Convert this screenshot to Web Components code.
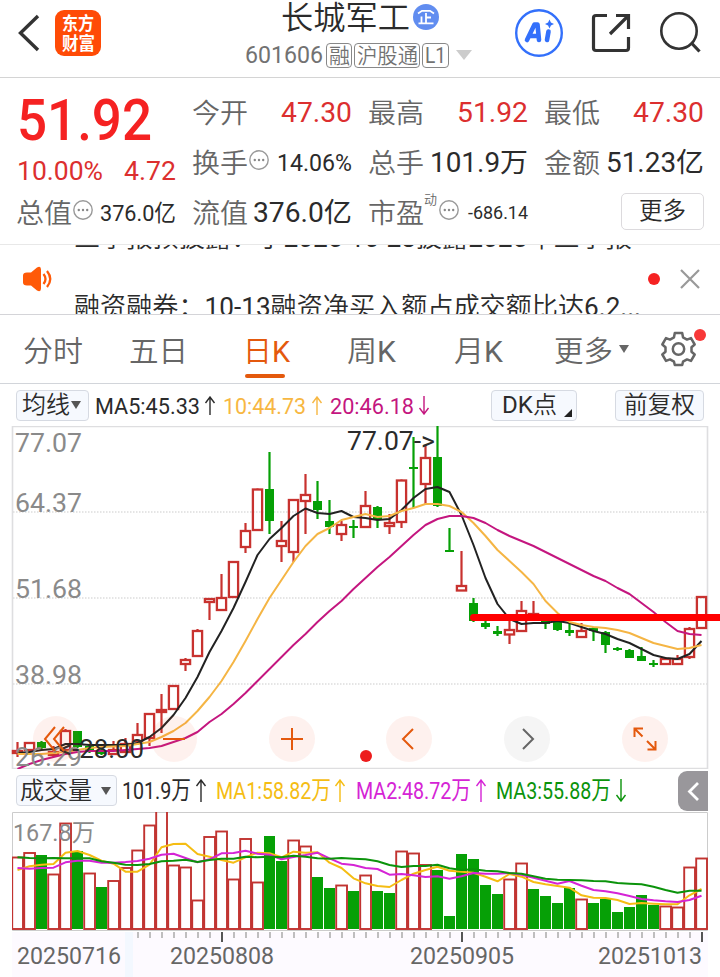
<!DOCTYPE html>
<html lang="zh-CN">
<head>
<meta charset="UTF-8">
<title>长城军工 601606</title>
<style>
  :root {
    --red: #dc2f2f;
    --orange: #e4590d;
    --grey: #666;
    --dark: #2b2b2b;
  }
  body {
    margin: 0;
    width: 720px;
    height: 977px;
    overflow: hidden;
    background: #fff;
    color: var(--dark);
    font-family: Roboto, "Noto Sans CJK SC", sans-serif;
  }
</style>
</head>
<body>
<app-header></app-header>
<quote-panel></quote-panel>
<news-ticker></news-ticker>
<period-tabs></period-tabs>
<ma-bar></ma-bar>
<kline-chart></kline-chart>
<volume-bar></volume-bar>
<volume-chart></volume-chart>

<script>
class BaseElement extends HTMLElement {
  constructor() {
    super();
    this.attachShadow({ mode: 'open' });
  }
  connectedCallback() {
    this.shadowRoot.innerHTML = this.render();
  }
}

// with "split", Chinese runs are drawn lighter than the digits beside them
const lightHan = text => text.replace(/[\u3000-\u9fff\uff00-\uffef]+/g, '<tspan class="han">$&</tspan>');

// one line of text, set to a fixed width
class FitText extends BaseElement {
  render() {
    const w = this.getAttribute('w');
    const size = Number(this.getAttribute('size'));
    const text = this.textContent.trim();
    const latin = /[A-Za-z0-9]/.test(text);
    const weight = this.getAttribute('weight') || (latin ? 400 : 350);
    return `
      <style>
        :host { display: block; flex: none; width: ${w}px; height: ${size}px; }
        svg { display: block; overflow: visible; }
        text { fill: currentColor; font-size: ${size}px; font-weight: ${weight}; }
        .han { font-weight: 350; }
      </style>
      <svg width="${w}" height="${size}"><text x="0" y="${size * 0.87}" textLength="${w}" lengthAdjust="spacingAndGlyphs">${this.hasAttribute('split') ? lightHan(text) : text}</text></svg>`;
  }
}
customElements.define('fit-text', FitText);

class TrendArrow extends BaseElement {
  render() {
    const h = Number(this.getAttribute('h') || 19);
    const flip = this.hasAttribute('down') ? `transform="rotate(180 6 ${h / 2})"` : '';
    return `
      <style>:host { display: block; flex: none; width: 12px; height: ${h}px; } svg { display: block; }</style>
      <svg width="12" height="${h}" fill="none" stroke="currentColor" stroke-width="1.4">
        <path ${flip} d="M6 ${h}V1M1.5 7L6 1l4.5 6"/>
      </svg>`;
  }
}
customElements.define('trend-arrow', TrendArrow);

class AppHeader extends BaseElement {
  render() {
    return `
      <style>
        :host { display: flex; height: 77px; border-bottom: 1px solid #d4d4d4; box-sizing: content-box; }
        .left { display: flex; width: 245px; }
        .back { margin: 14px 0 0 17px; }
        .logo {
          width: 46px; height: 46px; margin: 10px 0 0 14px; border-radius: 9px; background: #ff4b06; color: #fff;
          display: flex; flex-direction: column; align-items: center; justify-content: center; gap: 1px;
        }
        .mid { width: 270px; }
        .title { display: flex; align-items: center; margin: 1px 0 0 36px; height: 32px; gap: 3px; }
        .sub { display: flex; align-items: center; margin-top: 9px; height: 26px; color: #727272; gap: 2px; }
        .tag { border: 1px solid #888; border-radius: 4px; height: 23px; display: flex; align-items: center; justify-content: center; }
        .tri { border: 8px solid transparent; border-top: 10px solid #ccc; border-bottom: 0; margin-left: 5px; }
      </style>
      <div class="left">
        <svg class="back" width="24" height="40" fill="none" stroke="#333" stroke-width="3.4"><path d="M21 2L3.5 19 21 36"/></svg>
        <div class="logo">
          <fit-text w="32" size="18.500" weight="700">东方</fit-text>
          <fit-text w="33" size="18.500" weight="700">财富</fit-text>
        </div>
      </div>
      <div class="mid">
        <div class="title">
          <fit-text w="129" size="32">长城军工</fit-text>
          <svg width="26" height="26"><circle cx="13" cy="13" r="13" fill="#618df0"/><g fill="none" stroke="#fff" stroke-width="1.8"><path d="M5 9.500L9 6.800H17L21 9.500M13 9V19M13 13.500H18M8.500 12.500V19M5.500 19.300H20.500"/></g></svg>
        </div>
        <div class="sub">
          <fit-text w="78" size="23.500">601606</fit-text>
          <span class="tag" style="width:24px;margin-left:1px"><fit-text w="21" size="21">融</fit-text></span>
          <span class="tag" style="width:64px"><fit-text w="61" size="21">沪股通</fit-text></span>
          <span class="tag" style="width:25px"><fit-text w="21" size="22">L1</fit-text></span>
          <i class="tri"></i>
        </div>
      </div>
      <svg width="205" height="77" fill="none" stroke="#333" stroke-width="3.2">
        <circle cx="24" cy="33" r="22.800" stroke="#3370fb" stroke-width="2.400"/>
        <g stroke="#3370fb" stroke-width="4.600" stroke-linejoin="round" stroke-linecap="round"><path d="M12 40L19.500 24.500H22.500L24 40M15 36H23"/><path d="M33.500 31.500L32 40"/></g>
        <path d="M34.500 19.500L35.900 22.600 39 24 35.900 25.400 34.500 28.500 33.100 25.400 30 24 33.100 22.600Z" fill="#3370fb" stroke="none"/>
        <path d="M92 15.500H81q-2.500 0-2.500 2.500V48q0 2.500 2.500 2.500H111q2.500 0 2.500-2.500V37M101 15.500H113.500V29M113 16L95 34"/>
        <circle cx="164" cy="31" r="17.700" stroke-width="2.600"/><path d="M176 42.500L184.500 51.500"/>
      </svg>`;
  }
}
customElements.define('app-header', AppHeader);

class InfoDot extends BaseElement {
  render() {
    return `
      <style>:host { display: block; width: 20px; height: 20px; } svg { display: block; }</style>
      <svg width="20" height="20"><circle cx="10" cy="10" r="9.200" fill="none" stroke="#999" stroke-width="1.400"/>
      <g fill="#888"><circle cx="5.800" cy="10" r="1.200"/><circle cx="10" cy="10" r="1.200"/><circle cx="14.200" cy="10" r="1.200"/></g></svg>`;
  }
}
customElements.define('info-dot', InfoDot);

class StatItem extends BaseElement {
  render() {
    const label = this.getAttribute('label');
    return `
      <style>
        :host { display: flex; align-items: center; height: 50px; }
        .label { color: var(--grey); margin: 1px 0 0 -1px; }
        .sup { align-self: flex-start; margin: 6px 0 0 0; color: var(--grey); }
        info-dot { margin: -4px 0 0 ${this.hasAttribute('sup') ? 2 : 1}px; }
        .value { margin-left: auto; color: ${this.hasAttribute('red') ? 'var(--red)' : 'var(--dark)'}; }
      </style>
      <fit-text class="label" w="56" size="27.500">${label}</fit-text>
      ${this.hasAttribute('sup') ? `<fit-text class="sup" w="13" size="13">${this.getAttribute('sup')}</fit-text>` : ''}
      ${this.hasAttribute('info') ? '<info-dot></info-dot>' : ''}
      <fit-text class="value" w="${this.getAttribute('w')}" size="${this.getAttribute('size') || 27.5}">${this.textContent}</fit-text>`;
  }
}
customElements.define('stat-item', StatItem);

class QuotePanel extends BaseElement {
  render() {
    return `
      <style>
        :host { display: grid; grid-template-columns: repeat(4, 159px); grid-template-rows: repeat(3, 50px); column-gap: 17px; padding: 9px 15px 7px 17px; height: 150px; border-bottom: 1px solid #e8e8e8; }
        .price { grid-row: span 2; color: #f52222; }
        .price fit-text { margin: 4px 0 0; }
        .chg { display: flex; justify-content: space-between; align-items: center; height: 28px; margin-top: 8px; color: var(--red); }
        .chg fit-text { margin: 0; }
        .more { justify-self: end; align-self: center; box-sizing: border-box; width: 83px; height: 37px; border: 1px solid #dcdadd; border-radius: 5px; display: flex; align-items: center; justify-content: center; margin-bottom: 2px; }
      </style>
      <div class="price">
        <fit-text w="135" size="56.500" weight="500">51.92</fit-text>
        <div class="chg"><fit-text w="86" size="26">10.00%</fit-text><fit-text w="52" size="26">4.72</fit-text></div>
      </div>
      <stat-item label="今开" w="71" red>47.30</stat-item>
      <stat-item label="最高" w="71" red>51.92</stat-item>
      <stat-item label="最低" w="71" red>47.30</stat-item>
      <stat-item label="换手" w="75" size="23" info>14.06%</stat-item>
      <stat-item label="总手" w="98">101.9万</stat-item>
      <stat-item label="金额" w="98">51.23亿</stat-item>
      <stat-item label="总值" w="76" size="22.5" info>376.0亿</stat-item>
      <stat-item label="流值" w="99">376.0亿</stat-item>
      <stat-item label="市盈" w="60" size="18.5" sup="动" info>-686.14</stat-item>
      <div class="more"><fit-text w="47" size="23.500">更多</fit-text></div>`;
  }
}
customElements.define('quote-panel', QuotePanel);

class NewsTicker extends BaseElement {
  render() {
    return `
      <style>
        :host { display: flex; align-items: center; height: 69px; border-bottom: 1px solid #d4d4d8; overflow: hidden; }
        .horn { margin: -2px 0 0 22px; }
        .lines { width: 567px; height: 69px; margin-left: 21px; display: flex; flex-direction: column; gap: 43px; }
        .lines fit-text:first-child { margin-top: -21px; }
        .dot { width: 12px; height: 12px; border-radius: 50%; background: #f52222; margin: -1px 0 0 7px; }
        .close { margin: -1px 0 0 19px; }
      </style>
      <svg class="horn" width="31" height="26"><path d="M5 6.500h4L15 1.500q4-2 4 2V22.500q0 4-4 2L9 19.500H5q-4 0-4-3V9.500q0-3 4-3z" fill="#ff5a08"/><path d="M21.500 8q4 5 0 10M25 5q6.500 8 0 16" fill="none" stroke="#ff5a08" stroke-width="2.300"/></svg>
      <div class="lines">
        <fit-text w="558" size="26" split>三季报预披露：于2025-10-28披露2025年三季报</fit-text>
        <fit-text w="567" size="26" split>融资融券：10-13融资净买入额占成交额比达6.2...</fit-text>
      </div>
      <i class="dot"></i>
      <svg class="close" width="22" height="22" stroke="#999" stroke-width="2.200"><path d="M2 2l18 18M20 2L2 20"/></svg>`;
  }
}
customElements.define('news-ticker', NewsTicker);

class PeriodTabs extends BaseElement {
  render() {
    return `
      <style>
        :host { display: flex; height: 68px; border-bottom: 1px solid #d2d5da; color: var(--grey); }
        fit-text { margin-top: 22px; }
        .on { color: var(--orange); }
        .on i { display: block; width: 40px; height: 4px; margin: 8px 0 0 2px; border-radius: 2px; background: var(--orange); }
        .tri { margin: 30px 0 0 6px; height: 0; border: 5.500px solid transparent; border-top: 8.500px solid #666; border-bottom: 0; }
        .gear { margin: 12px 0 0 31px; }
      </style>
      <fit-text style="margin-left:23px" w="60" size="29">分时</fit-text>
      <fit-text style="margin-left:46px" w="59" size="29">五日</fit-text>
      <div class="on" style="margin-left:55px"><fit-text w="47" size="29" split>日K</fit-text><i></i></div>
      <fit-text style="margin-left:57px" w="49" size="29" split>周K</fit-text>
      <fit-text style="margin-left:58px" w="49" size="29" split>月K</fit-text>
      <fit-text style="margin-left:51px" w="59" size="29">更多</fit-text>
      <i class="tri"></i>
      <svg class="gear" width="48" height="42">
        <g fill="none" stroke="#666" stroke-width="2.500" stroke-linejoin="round">
          <path transform="translate(1 -.5)" d="M13.800 6.500h7.400l.8 4.300 4 2.300 4-1.500 3.700 6.400-3.200 2.700v4.600l3.200 2.700-3.700 6.400-4-1.500-4 2.300-.8 3.300h-7.400l-.8-3.300-4-2.300-4 1.500-3.700-6.400 3.200-2.700v-4.600l-3.200-2.700 3.700-6.400 4 1.500 4-2.300z"/>
          <circle cx="18.500" cy="22" r="5.700"/>
        </g>
        <circle cx="40" cy="8" r="6" fill="#f83838"/>
      </svg>`;
  }
}
customElements.define('period-tabs', PeriodTabs);

class PillButton extends BaseElement {
  render() {
    return `
      <style>
        :host { display: flex; flex: none; box-sizing: border-box; align-items: center; height: 31px; border: 1px solid #d6dae2; border-radius: 4px; background: #f6f9fe; }
      </style><slot></slot>`;
  }
}
customElements.define('pill-button', PillButton);

class MaBar extends BaseElement {
  render() {
    return `
      <style>
        :host { display: flex; align-items: center; height: 42px; }
        .tri { border: 5px solid transparent; border-top: 8px solid #555; border-bottom: 0; margin-left: 1px; }
        .corner { border-left: 8px solid transparent; border-bottom: 8px solid #222; margin: 16px 0 0 7px; }
      </style>
      <pill-button style="width:73px;margin-left:16px"><fit-text style="margin-left:5px" w="48" size="23.500">均线</fit-text><i class="tri"></i></pill-button>
      <fit-text style="margin-left:6px" w="105" size="22.500">MA5:45.33</fit-text>
      <trend-arrow style="margin-left:4px"></trend-arrow>
      <fit-text style="margin-left:7px;color:#f7b742" w="83" size="22.500">10:44.73</fit-text>
      <trend-arrow style="margin-left:5px;color:#f7b742"></trend-arrow>
      <fit-text style="margin-left:7px;color:#c4167f" w="84" size="22.500">20:46.18</fit-text>
      <trend-arrow down style="margin-left:4px;color:#c4167f"></trend-arrow>
      <pill-button style="width:86px;margin-left:61px"><fit-text style="margin-left:10px" w="55" size="23.500" split>DK点</fit-text><i class="corner"></i></pill-button>
      <pill-button style="width:89px;margin-left:38px"><fit-text style="margin-left:8px" w="71" size="23.500">前复权</fit-text></pill-button>`;
  }
}
customElements.define('ma-bar', MaBar);

const STEP = 12;
const barX = i => 17.5 + i * STEP;
const polyline = (ys, color, dy = 0, k = 1) =>
  `<polyline fill="none" stroke="${color}" stroke-width="2" stroke-linejoin="round" points="${ys.map((y, i) => barX(i) + ',' + (y * k + dy).toFixed(1)).join(' ')}"/>`;

// high, body top, body bottom, low, colour
const candles = [
  [742,750,753,757,'r'],[742,742,750,752,'r'],[741,742,748,749,'g'],[746,751,755,757,'r'],[729,730,750,750,'r'],
  [731,731,747,748,'g'],[744,746,751,753,'g'],[748,750,754,755,'g'],[741,749,754,755,'r'],[738,743,752,753,'r'],
  [723,734,741,745,'r'],[713,713,738,746,'r'],[694,709,712,733,'r'],[685,685,709,709,'r'],[658,659,664,671,'r'],
  [629,630,656,657,'r'],[598,598,602,620,'r'],[574,597,610,610,'r'],[561,561,597,597,'r'],[523,530,547,553,'r'],
  [488,488.5,530,530,'r'],[452,489,521,534,'g'],[521,540,546,562,'r'],[499,499,552,562,'r'],[474,494,501,534,'r'],
  [481,501,510,519,'g'],[500,521,527,534,'g'],[521,524,534,541,'r'],[520,526,528,538,'g'],[491,505,527,527,'r'],
  [506,507,520,528,'g'],[514,522,526,534,'r'],[479,479.5,522,528,'r'],[437,467,469,508,'g'],[445,457,484,505,'r'],
  [426,457,506,507,'g'],[528,550,552,552,'g'],[551,585,590.5,591,'r'],[598,603,621,622,'g'],[620,623,627,629,'g'],
  [626,631,634,636,'g'],[621,629,634.5,644,'r'],[601,610,631,631,'r'],[601,613,616,618,'r'],[619,621,624,629,'g'],
  [620,622,630,631,'g'],[622,630,633,636,'g'],[623,630,637,637,'r'],[627,628,631,641,'g'],[631,632,645,653,'g'],
  [647,648,650,651,'g'],[649,650,658,658,'g'],[647,656,661,661,'g'],[660,663,665,667,'g'],[657,658,664,664,'r'],
  [655,658,664,664,'r'],[627,628,657,659,'r'],[596,596,628,628,'r']
];
const ma5 = [753,752,750,749,744,744,745,745,745,745,743,737,728,715,698,677,652,631,608,582,555,539,528,516,508.5,513,514,511,517,518,520,519,510,498,489,487,492,515,545,578,604,619,624,623,623,621,623,627,631,634,639,643,649,655,658,659,654,641];
const ma10 = [754,754,754,753,752,750,748,747,746.5,746,744,742,737,731,723,711,697,681,662,641,619,598,580,562,546,534,528,520,517,514,517,516,511,508,504,504,506,512,523,536,550,561,572,584,601,613,622,625,627,628,630,633,638,643,646,649,648,645];
const ma20 = [769,764,760,757,754,752,751,751,751,750,749,748,746,742,738,732,722,714,704,693,681,669,657,645,634,622,611,601,589,578,567,557,546,535,525,519,516,516,518,523,530,536,541,546,552,558,564,570,576,581,588,594,603,612,622,631,634,635];

class RoundButton extends BaseElement {
  render() {
    const icons = {
      first: '<path d="M22 11L12 23 22 35M31 11L21 23 31 35"/>',
      minus: '<path d="M12 23H34"/>',
      plus: '<path d="M12 23H34M23 12V34"/>',
      prev: '<path d="M27 13L17 23 27 33"/>',
      next: '<path d="M19 13L29 23 19 33"/>',
      full: '<path d="M21 12.500H12.500V21M13 13L20.500 20.500M25 25L33 33M25.500 33.500H33.500V25"/>'
    };
    const grey = this.getAttribute('icon') === 'next';
    return `
      <style>
        :host { display: block; width: 46px; height: 46px; border-radius: 50%; background: ${grey ? 'rgba(110,110,110,.065)' : 'rgba(245,80,40,.08)'}; }
        svg { display: block; }
      </style>
      <svg width="46" height="46" fill="none" stroke="${grey ? '#666' : '#e4590d'}" stroke-width="2">${icons[this.getAttribute('icon')]}</svg>`;
  }
}
customElements.define('round-button', RoundButton);

class KlineChart extends BaseElement {
  candle([high, top, bottom, low, c], i) {
    const x = barX(i);
    if (c === 'g') {
      return `<path d="M${x} ${high}V${low}" stroke="#06a006" stroke-width="2.2"/><rect x="${x - 4.5}" y="${top}" width="9" height="${bottom - top}" fill="#06a006"/>`;
    }
    return `<path d="M${x} ${high}V${top}M${x} ${bottom}V${low}" stroke="#c8322f" stroke-width="2.2"/><rect x="${x - 4.6}" y="${top + 1}" width="9.2" height="${Math.max(bottom - top - 1, 1)}" fill="none" stroke="#c8322f" stroke-width="2.3"/>`;
  }
  render() {
    const labels = [['77.07', 452], ['64.37', 511.5], ['51.68', 597.5], ['38.98', 683.5], ['26.29', 765.5]];
    return `
      <style>
        :host { display: block; position: relative; height: 343px; }
        svg { display: block; }
        text { font-size: 25.5px; fill: #8a8a8a; }
        .mark { fill: #2b2b2b; }
        .controls { position: absolute; left: 33px; right: 52px; top: 290px; display: flex; justify-content: space-between; }
      </style>
      <svg width="720" height="343" viewBox="0 426 720 343">
        <path d="M12.500 768.500V426.500H707.500V768.500Z" fill="none" stroke="#dedee0" stroke-width="1.600"/>
        <path d="M13 512H707M13 598H707M13 684H707" stroke="#ddd" stroke-width="1.400" stroke-dasharray="1.500 1.500"/>
        ${candles.map((c, i) => this.candle(c, i)).join('')}
        ${polyline(ma5, '#222')}${polyline(ma10, '#f5b544')}${polyline(ma20, '#c4167f')}
        ${labels.map(([t, y]) => `<text x="15" y="${y}" textLength="67" lengthAdjust="spacingAndGlyphs">${t}</text>`).join('')}
        <text class="mark" x="347" y="450" textLength="88" lengthAdjust="spacingAndGlyphs">77.07-&gt;</text>
        <text class="mark" x="59" y="757.500" textLength="85" lengthAdjust="spacingAndGlyphs">&lt;-28.00</text>
        <path d="M473 617.500H720" stroke="#f00" stroke-width="7"/><circle cx="473.500" cy="617.500" r="3.500" fill="#f00"/>
        <circle cx="366" cy="756" r="6" fill="#ed1c1c"/>
      </svg>
      <div class="controls">
        ${['first', 'minus', 'plus', 'prev', 'next', 'full'].map(n => `<round-button icon="${n}"></round-button>`).join('')}
      </div>`;
  }
}
customElements.define('kline-chart', KlineChart);

class VolumeBar extends BaseElement {
  render() {
    return `
      <style>
        :host { display: flex; align-items: center; height: 43px; }
        .tri { border: 5px solid transparent; border-top: 8px solid #555; border-bottom: 0; margin-left: 9px; }
        .side { width: 30px; height: 40px; margin-left: auto; margin-right: 12px; border-radius: 9px 0 0 9px; background: #99979b; }
      </style>
      <pill-button style="width:101px;margin-left:16px"><fit-text style="margin-left:3px" w="72" size="23.500">成交量</fit-text><i class="tri"></i></pill-button>
      <fit-text style="margin-left:5px" w="69" size="24.500">101.9万</fit-text>
      <trend-arrow h="23" style="margin-left:4px"></trend-arrow>
      <fit-text style="margin-left:9px;color:#f5bd13" w="115" size="24.500">MA1:58.82万</fit-text>
      <trend-arrow h="23" style="margin-left:3px;color:#f5bd13"></trend-arrow>
      <fit-text style="margin-left:10px;color:#d524d5" w="115" size="24.500">MA2:48.72万</fit-text>
      <trend-arrow h="23" style="margin-left:4px;color:#d524d5"></trend-arrow>
      <fit-text style="margin-left:9px;color:#0b930b" w="115" size="24.500">MA3:55.88万</fit-text>
      <trend-arrow h="23" down style="margin-left:4px;color:#0b930b"></trend-arrow>
      <svg class="side" width="30" height="40" fill="none" stroke="#fff" stroke-width="2.800"><path d="M20 12L11.500 20.500 20 29"/></svg>`;
  }
}
customElements.define('volume-bar', VolumeBar);

const volTop = [857,852.5,855,874,823,851,873,887,880.5,867.5,850,825,800,865,867,900,836.5,831,879,838.5,882,836,861,840,846,877,888,885,891,875,891,893,851,853,864.5,870,916,854,859,885,894,879,863,889,896,903,888,899,903,899,912,907,895,905,906,907,867,858];
const volColor = 'rrgrrgrgrrrrrrrrrrrrrggrrggrgrggrrrggggggrrggggrggggggrrrr';
// averages are kept in thirds of a pixel
const vma1 = [300,289,284,282,248,243,255,272,281,305,305,284,232,222,221,252,260,270,278,262,248,250,262,245,248,247,278,294,325,340,348,351,330,311,300,290,302,305,308,320,334,312,320,336,343,348,353,376,383,384,390,402,399,401,403,403,376,357];
const vma2 = [294,296,294,293,277,272,272,278,278,276,273,266,254,251,264,277,268,250,249,242,251,254,268,261,255,248,265,281,285,294,297,314,312,316,321,319,326,319,309,311,311,309,314,323,332,341,333,347,360,364,370,378,387,391,394,396,390,377];
const vma3 = [262,264,265,264,265,265,265,274,278,284,285,282,274,272,269,276,270,266,266,260,262,260,262,257,260,265,266,264,266,268,274,285,291,288,288,284,295,300,298,302,304,309,311,319,326,329,330,331,333,334,339,341,343,350,360,368,362,362];

class VolumeChart extends BaseElement {
  render() {
    const bars = volTop.map((y, i) => {
      const x = barX(i);
      return volColor[i] === 'g'
        ? `<rect x="${x - 5.5}" y="${y}" width="11" height="${929 - y}" fill="#06a006"/>`
        : `<rect x="${x - 5.3}" y="${y + 0.5}" width="10.800" height="${928.5 - y}" fill="none" stroke="#c13330" stroke-width="1.900"/>`;
    });
    const ticks = [];
    for (let i = 10; i < 58; i++) {
      const major = i === 17 || i === 37 || i === 57;
      ticks.push(`<path d="M${barX(i) + 0.5} 932v${major ? 10 : 6}" stroke="${major ? '#555' : '#aaa'}" stroke-width="${major ? 2 : 1.5}"/>`);
    }
    const dates = [['20250716', 17], ['20250808', 170], ['20250905', 410], ['20251013', 598]];
    return `
      <style>
        :host { display: block; height: 165px; }
        svg { display: block; }
        text { font-size: 23.5px; fill: #666; }
        .max { font-size: 24px; fill: #8a8a8a; }
      </style>
      <svg width="720" height="165" viewBox="0 812 720 165">
        <defs><clipPath id="area"><rect x="12" y="812" width="696" height="119"/></clipPath></defs>
        <rect x="12" y="932" width="696" height="45" fill="#fdfaff"/>
        <rect x="125" y="932" width="8" height="45" fill="#f3f8ff"/>
        <path d="M12.500 812.500H707.500V930.500H12.500Z" fill="none" stroke="#ccc"/>
        <g clip-path="url(#area)">${bars.join('')}</g>
        ${polyline(vma1, '#f5bd13', 770, 1 / 3)}${polyline(vma2, '#d524d5', 770, 1 / 3)}${polyline(vma3, '#0b930b', 770, 1 / 3)}
        <text class="max" x="13" y="841" textLength="82" lengthAdjust="spacingAndGlyphs">167.8万</text>
        ${ticks.join('')}
        ${dates.map(([t, x]) => `<text x="${x}" y="964" textLength="104" lengthAdjust="spacingAndGlyphs">${t}</text>`).join('')}
      </svg>`;
  }
}
customElements.define('volume-chart', VolumeChart);
</script>
</body>
</html>
